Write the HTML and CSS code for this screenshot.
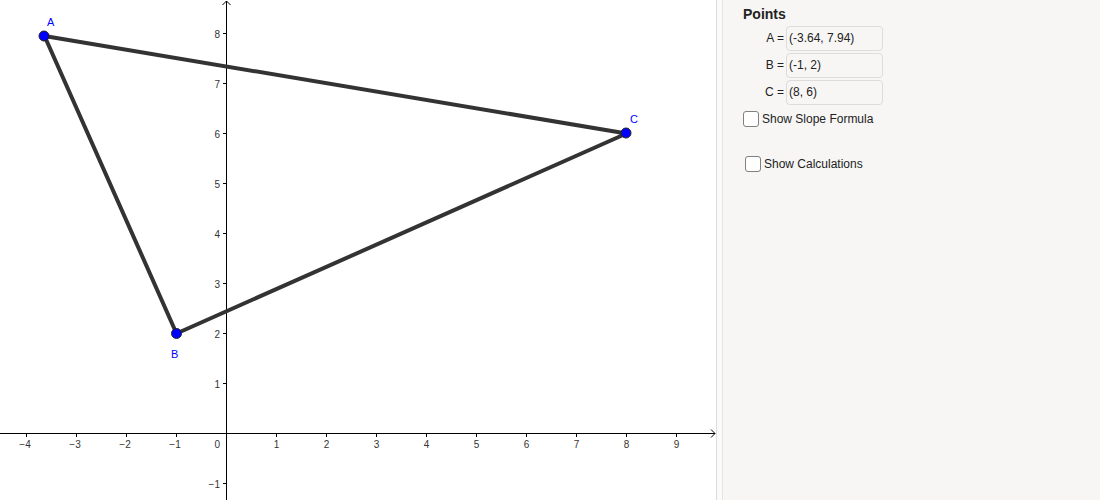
FILE: index.html
```html
<!DOCTYPE html>
<html>
<head>
<meta charset="utf-8">
<link rel="stylesheet" href="styles.css">
</head>
<body>
<div class="app">
  <div class="canvas">
    <svg width="716" height="500" viewBox="0 0 716 500" xmlns="http://www.w3.org/2000/svg">
      <g class="axes" stroke="#000" stroke-width="1" fill="none">
        <line x1="0" y1="433.5" x2="715" y2="433.5"/>
        <polyline points="711,429.5 715,433.5 711,437.5"/>
        <line x1="226.5" y1="1" x2="226.5" y2="500"/>
        <polyline points="222.5,5 226.5,1 230.5,5"/>
        <g>
          <line x1="26.5" y1="433.5" x2="26.5" y2="437"/>
          <line x1="76.5" y1="433.5" x2="76.5" y2="437"/>
          <line x1="126.5" y1="433.5" x2="126.5" y2="437"/>
          <line x1="176.5" y1="433.5" x2="176.5" y2="437"/>
          <line x1="276.5" y1="433.5" x2="276.5" y2="437"/>
          <line x1="326.5" y1="433.5" x2="326.5" y2="437"/>
          <line x1="376.5" y1="433.5" x2="376.5" y2="437"/>
          <line x1="426.5" y1="433.5" x2="426.5" y2="437"/>
          <line x1="476.5" y1="433.5" x2="476.5" y2="437"/>
          <line x1="526.5" y1="433.5" x2="526.5" y2="437"/>
          <line x1="576.5" y1="433.5" x2="576.5" y2="437"/>
          <line x1="626.5" y1="433.5" x2="626.5" y2="437"/>
          <line x1="676.5" y1="433.5" x2="676.5" y2="437"/>
        </g>
        <g>
          <line x1="223" y1="33.5" x2="226.5" y2="33.5"/>
          <line x1="223" y1="83.5" x2="226.5" y2="83.5"/>
          <line x1="223" y1="133.5" x2="226.5" y2="133.5"/>
          <line x1="223" y1="183.5" x2="226.5" y2="183.5"/>
          <line x1="223" y1="233.5" x2="226.5" y2="233.5"/>
          <line x1="223" y1="283.5" x2="226.5" y2="283.5"/>
          <line x1="223" y1="333.5" x2="226.5" y2="333.5"/>
          <line x1="223" y1="383.5" x2="226.5" y2="383.5"/>
          <line x1="223" y1="483.5" x2="226.5" y2="483.5"/>
        </g>
      </g>
      <g class="ticklabels" text-anchor="middle">
        <text x="25" y="448">−4</text>
        <text x="75" y="448">−3</text>
        <text x="125" y="448">−2</text>
        <text x="175" y="448">−1</text>
        <text x="276.5" y="448">1</text>
        <text x="326.5" y="448">2</text>
        <text x="376.5" y="448">3</text>
        <text x="426.5" y="448">4</text>
        <text x="476.5" y="448">5</text>
        <text x="526.5" y="448">6</text>
        <text x="576.5" y="448">7</text>
        <text x="626.5" y="448">8</text>
        <text x="676.5" y="448">9</text>
      </g>
      <g class="ticklabels" text-anchor="end">
        <text x="220" y="448">0</text>
        <text x="220" y="37.5">8</text>
        <text x="220" y="87.5">7</text>
        <text x="220" y="137.5">6</text>
        <text x="220" y="187.5">5</text>
        <text x="220" y="237.5">4</text>
        <text x="220" y="287.5">3</text>
        <text x="220" y="337.5">2</text>
        <text x="220" y="387.5">1</text>
        <text x="220" y="487.5">−1</text>
      </g>
      <polygon points="44.5,36 176.5,333.5 626.5,133.5" fill="none" stroke="#333" stroke-width="4" stroke-linejoin="round"/>
      <g fill="#0000ff" stroke="#222" stroke-width="1">
        <circle cx="44" cy="36" r="5"/>
        <circle cx="176.5" cy="333.5" r="5"/>
        <circle cx="626" cy="133" r="5"/>
      </g>
      <g class="ptlabels">
        <text x="47" y="26">A</text>
        <text x="171" y="358">B</text>
        <text x="630" y="123">C</text>
      </g>
    </svg>
  </div>
  <div class="divider"></div>
  <div class="panel">
    <div class="title">Points</div>
    <div class="rows">
      <div class="row"><span class="lbl">A =</span><span class="input">(-3.64, 7.94)</span></div>
      <div class="row"><span class="lbl">B =</span><span class="input">(-1, 2)</span></div>
      <div class="row"><span class="lbl">C =</span><span class="input">(8, 6)</span></div>
    </div>
    <label class="check first"><span class="box"></span>Show Slope Formula</label>
    <label class="check second"><span class="box"></span>Show Calculations</label>
  </div>
</div>
</body>
</html>
```
FILE: styles.css
```css
html, body {
  margin: 0;
  padding: 0;
  background: #fff;
}
body {
  font-family: "Liberation Sans", Arial, sans-serif;
  width: 1100px;
  height: 500px;
  overflow: hidden;
}
.app {
  display: flex;
  height: 500px;
}
.canvas {
  width: 716px;
  height: 500px;
  background: #fff;
}
.canvas svg {
  display: block;
}
.ticklabels text {
  font-family: "Liberation Sans", Arial, sans-serif;
  font-size: 10px;
  fill: #333;
}
.ptlabels text {
  font-family: "Liberation Sans", Arial, sans-serif;
  font-size: 11px;
  fill: #0000ff;
}
.divider {
  width: 5px;
  background: #fafafa;
  border-left: 1px solid #dcdcdc;
  border-right: 1px solid #e4e4e4;
}
.panel {
  flex: 1;
  background: #f7f6f5;
  padding-left: 20px;
  color: #222;
  font-size: 12px;
}
.title {
  font-weight: bold;
  font-size: 14px;
  margin-top: 6px;
  height: 20px;
  line-height: 17px;
  color: #222;
}
.rows {
  display: flex;
  flex-direction: column;
  gap: 3px;
  margin-left: 21px;
}
.row {
  display: flex;
  align-items: center;
  gap: 2px;
  height: 24px;
}
.lbl {
  width: 20px;
  text-align: right;
  white-space: nowrap;
  color: #222;
}
.input {
  box-sizing: border-box;
  width: 97px;
  height: 25px;
  border: 1px solid #dddcdb;
  border-radius: 4px;
  background: #f7f6f5;
  padding-left: 2px;
  line-height: 22px;
  color: #222;
}
.check {
  display: flex;
  align-items: center;
  gap: 3px;
  color: #222;
}
.check.first {
  margin-top: 7px;
  height: 16px;
}
.check.second {
  margin-top: 29px;
  margin-left: 2px;
  height: 16px;
}
.box {
  box-sizing: border-box;
  width: 16px;
  height: 16px;
  border: 1.5px solid #808080;
  border-radius: 3px;
  background: #fff;
}
```
